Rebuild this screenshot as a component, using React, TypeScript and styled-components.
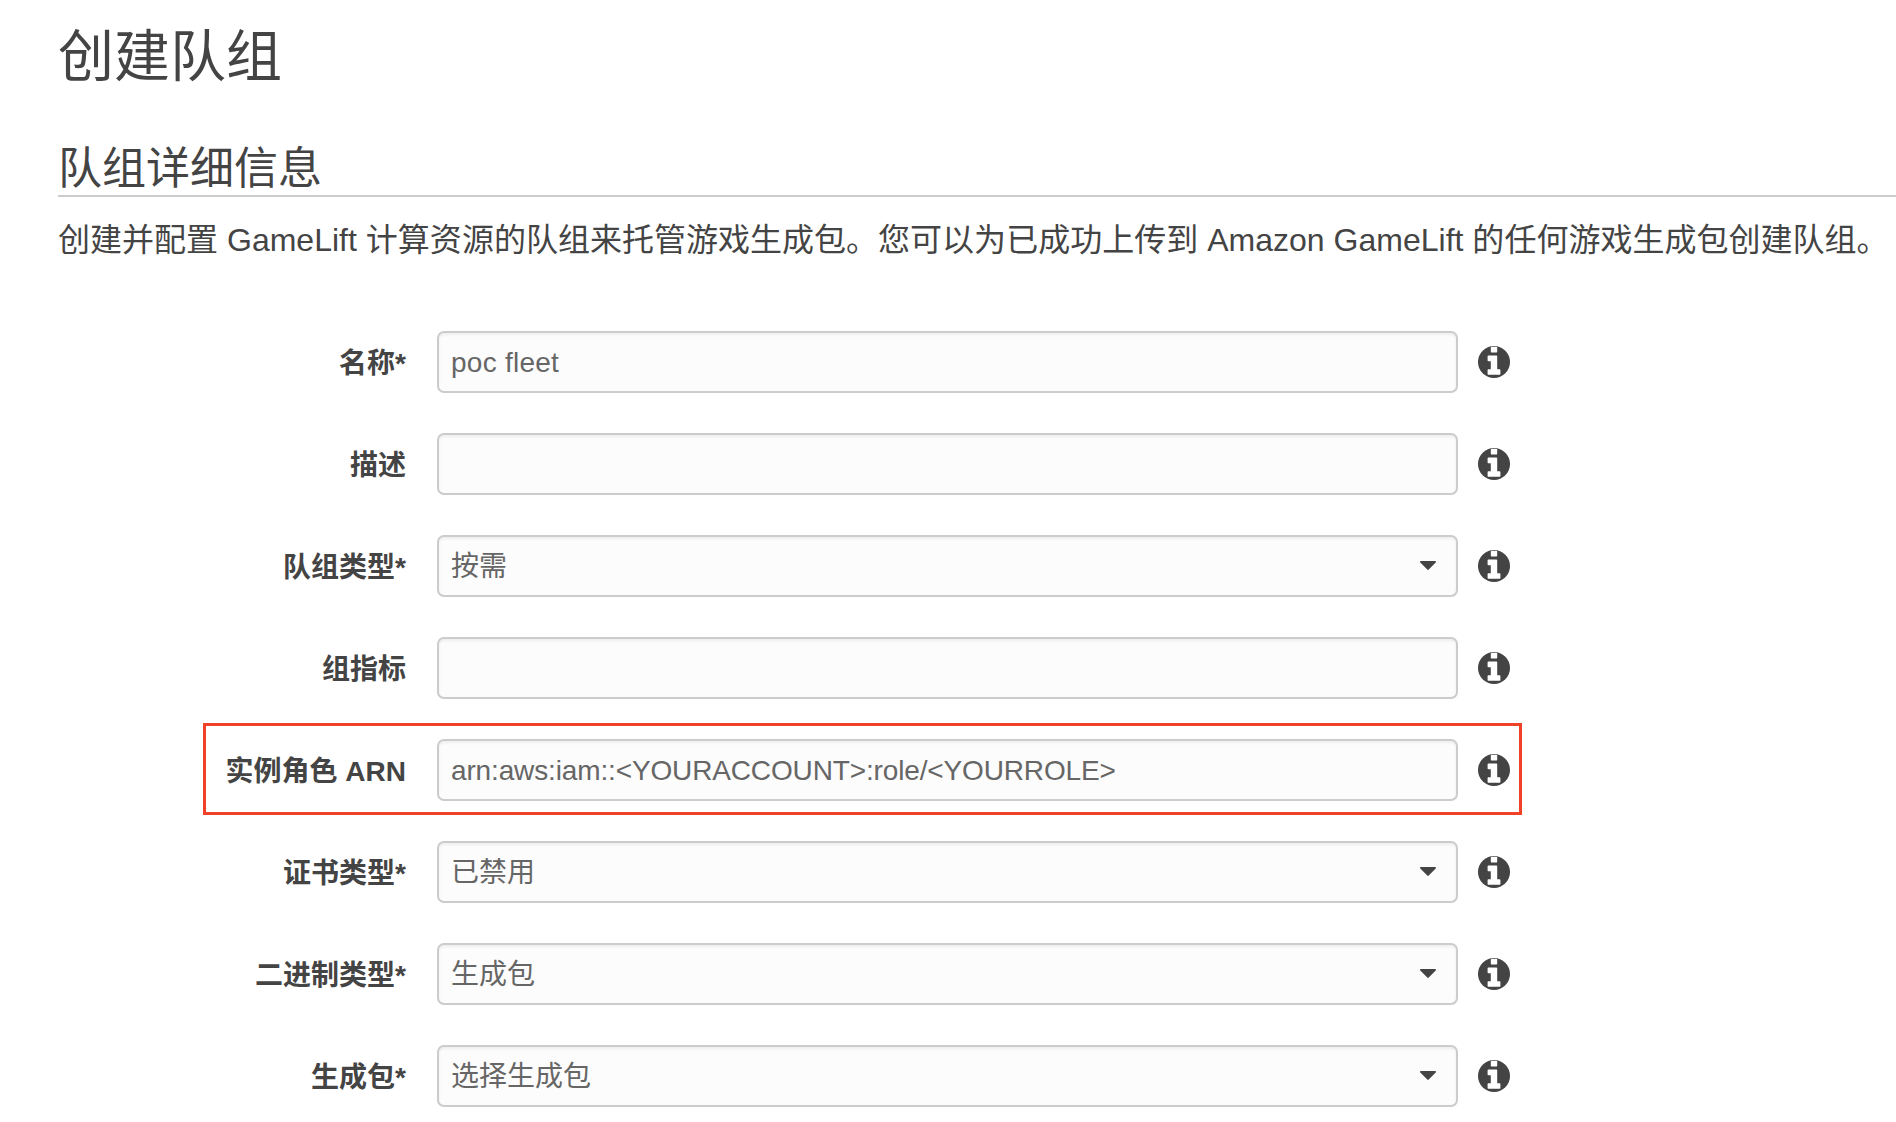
import styled, { createGlobalStyle } from 'styled-components';

////// STYLE >>>>>>>>>>>>>>>>>>>>>>>>>>>>>>>>>>>>>>>>>>>>>>>>>>>>>>>>>>>>>>>>>>>

const GlobalStyle = createGlobalStyle`
  html, body {
    margin: 0;
    background: #fff;
    overflow: hidden;
  }
  body {
    font-family: "Liberation Sans", "Noto Sans CJK SC", sans-serif;
    color: #444;
  }
`;

const Page = styled.div`
  width: 1896px;
  height: 1122px;
  box-sizing: border-box;
  padding: 19px 0 0 58px;
`;

const Title = styled.h1`
  margin: 0;
  height: 76px;
  font-size: 56px;
  line-height: 76px;
  font-weight: 400;
`;

const SectionTitle = styled.h2`
  margin: 47px 0 0;
  height: 53px;
  border-bottom: 2px solid #ccc;
  font-size: 44px;
  line-height: 54px;
  font-weight: 400;
`;

const Description = styled.p`
  margin: 23px 0 0;
  height: 40px;
  font-size: 32px;
  line-height: 40px;
  letter-spacing: 0.015px;
  white-space: nowrap;
`;

const Form = styled.form`
  display: flex;
  flex-direction: column;
  gap: 40px;
  margin-top: 71px;
`;

const Row = styled.div<{ $highlight?: boolean }>`
  position: relative;
  display: flex;
  align-items: center;
  height: 62px;

  ${props => props.$highlight && `
    &::after {
      content: "";
      position: absolute;
      left: 145px;
      top: -16px;
      width: 1319px;
      height: 92px;
      box-sizing: border-box;
      border: 3px solid #f04228;
      pointer-events: none;
    }
  `}
`;

const Label = styled.label`
  width: 348px;
  padding-bottom: 3px;
  text-align: right;
  font-size: 28px;
  font-weight: 700;
  color: #444;
  white-space: nowrap;
`;

const fieldStyle = `
  width: 1021px;
  height: 62px;
  box-sizing: border-box;
  margin-left: 31px;
  padding: 0 12px;
  border: 2px solid #ccc;
  border-radius: 7px;
  background: #fcfcfc;
  box-shadow: inset 0 2px 3px rgba(0, 0, 0, 0.06);
  font-family: "Liberation Sans", "Noto Sans CJK SC", sans-serif;
  font-size: 28px;
  color: #666;
`;

const Input = styled.input<{ $spacing?: number }>`
  ${fieldStyle}
  display: block;
  padding-top: 2px;
  letter-spacing: ${props => props.$spacing || 0}px;
  outline: none;
`;

const Select = styled.div`
  ${fieldStyle}
  display: flex;
  align-items: center;
  justify-content: space-between;
  padding-bottom: 4px;
`;

const Caret = styled.svg`
  width: 16px;
  height: 9px;
  margin: 2px 8px 0 0;
  fill: #444;
`;

const InfoSvg = styled.svg`
  flex: none;
  width: 32px;
  height: 32px;
  margin-left: 20px;
`;

////// COMPONENT >>>>>>>>>>>>>>>>>>>>>>>>>>>>>>>>>>>>>>>>>>>>>>>>>>>>>>>>>>>>>>>

type FieldRow = {
  label: string,
  value: string,
  select?: boolean,
  highlight?: boolean,
  spacing?: number
}

const rows: FieldRow[] = [
  { label: '名称*', value: 'poc fleet', spacing: 0.25 },
  { label: '描述', value: '' },
  { label: '队组类型*', value: '按需', select: true },
  { label: '组指标', value: '' },
  { label: '实例角色 ARN', value: 'arn:aws:iam::<YOURACCOUNT>:role/<YOURROLE>', highlight: true, spacing: -0.14 },
  { label: '证书类型*', value: '已禁用', select: true },
  { label: '二进制类型*', value: '生成包', select: true },
  { label: '生成包*', value: '选择生成包', select: true },
];

const InfoIcon = () => (
  <InfoSvg viewBox="256 256 1280 1280">
    <circle cx="896" cy="896" r="640" fill="#444" />
    <path
      fill="#fff"
      d="M1152 1376v-160q0-14-9-23t-23-9h-96v-512q0-14-9-23t-23-9h-320q-14 0-23 9t-9 23v160q0 14 9 23t23 9h96v320h-96q-14 0-23 9t-9 23v160q0 14 9 23t23 9h448q14 0 23-9t9-23zm-128-896v-160q0-14-9-23t-23-9h-192q-14 0-23 9t-9 23v160q0 14 9 23t23 9h192q14 0 23-9t9-23z"
    />
  </InfoSvg>
);

const App = () => {
  return (
    <Page>
      <GlobalStyle />
      <Title>创建队组</Title>
      <SectionTitle>队组详细信息</SectionTitle>
      <Description>
        创建并配置 GameLift 计算资源的队组来托管游戏生成包。您可以为已成功上传到 Amazon GameLift 的任何游戏生成包创建队组。
      </Description>
      <Form>
        {rows.map(row => (
          <Row key={row.label} $highlight={row.highlight}>
            <Label>{row.label}</Label>
            {row.select ? (
              <Select>
                {row.value}
                <Caret viewBox="0 0 16 9">
                  <path d="M1 0h14c.9 0 1.3 1 .7 1.6L8.7 8.6c-.4.4-1 .4-1.4 0L.3 1.6C-.3 1 .1 0 1 0z" />
                </Caret>
              </Select>
            ) : (
              <Input readOnly value={row.value} $spacing={row.spacing} />
            )}
            <InfoIcon />
          </Row>
        ))}
      </Form>
    </Page>
  )
}

export default App;
